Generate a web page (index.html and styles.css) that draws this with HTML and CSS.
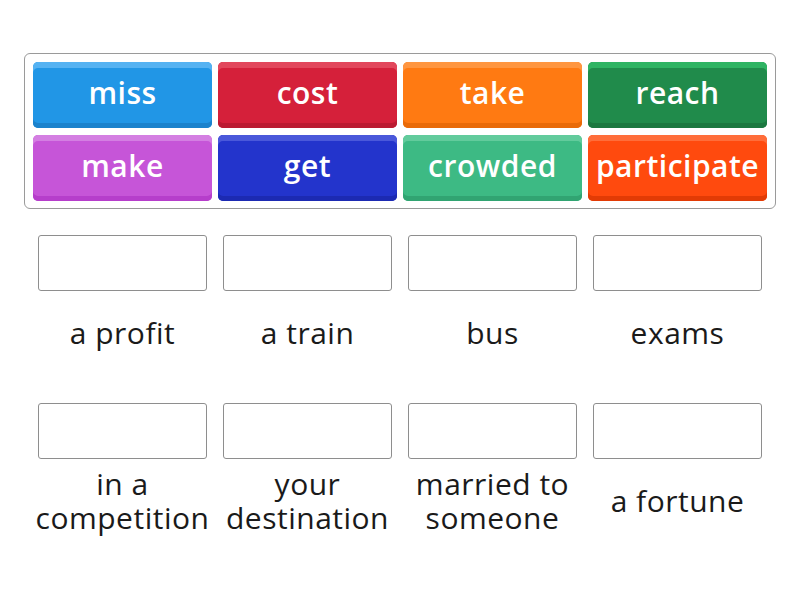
FILE: index.html
```html
<!DOCTYPE html>
<html>
<head>
<meta charset="utf-8">
<link rel="stylesheet" href="styles.css">
</head>
<body>
<div class="bank">
  <div class="tile t-blue">miss</div>
  <div class="tile t-red">cost</div>
  <div class="tile t-orange">take</div>
  <div class="tile t-green">reach</div>
  <div class="tile t-purple">make</div>
  <div class="tile t-navy">get</div>
  <div class="tile t-mint">crowded</div>
  <div class="tile t-vermil">participate</div>
</div>
<div class="targets">
  <div class="cell"><div class="box"></div><div class="label">a profit</div></div>
  <div class="cell"><div class="box"></div><div class="label">a train</div></div>
  <div class="cell"><div class="box"></div><div class="label">bus</div></div>
  <div class="cell"><div class="box"></div><div class="label">exams</div></div>
  <div class="cell"><div class="box"></div><div class="label">in a<br>competition</div></div>
  <div class="cell"><div class="box"></div><div class="label">your<br>destination</div></div>
  <div class="cell"><div class="box"></div><div class="label">married to<br>someone</div></div>
  <div class="cell"><div class="box"></div><div class="label">a fortune</div></div>
</div>
</body>
</html>
```
FILE: styles.css
```css
html, body {
  margin: 0;
  padding: 0;
  background: #ffffff;
  font-family: "Open Sans", "Lato", sans-serif;
}

.bank {
  margin: 53px 0 0 24px;
  width: 734px;
  border: 1px solid #9a9a9a;
  border-radius: 6px;
  padding: 8px 8px 7px 8px;
  display: grid;
  grid-template-columns: repeat(4, 179px);
  grid-auto-rows: 66px;
  column-gap: 6px;
  row-gap: 7px;
}

.tile {
  border-radius: 5px;
  color: #ffffff;
  font-size: 30px;
  font-weight: 600;
  letter-spacing: 0.5px;
  display: flex;
  align-items: center;
  justify-content: center;
  padding-bottom: 5px;
  box-sizing: border-box;
  white-space: nowrap;
}

.t-blue   { background: #2196e6; box-shadow: inset 0 6px 0 #55b2f2, inset 0 -5px 0 #1b82cc; }
.t-red    { background: #d5203a; box-shadow: inset 0 6px 0 #e2475c, inset 0 -5px 0 #bb1a31; }
.t-orange { background: #ff7a12; box-shadow: inset 0 6px 0 #ff9640, inset 0 -5px 0 #e96a08; }
.t-green  { background: #208b4b; box-shadow: inset 0 6px 0 #2fb463, inset 0 -5px 0 #1b7840; }
.t-purple { background: #c655d8; box-shadow: inset 0 6px 0 #d47fe2, inset 0 -5px 0 #b63ecb; }
.t-navy   { background: #2334cc; box-shadow: inset 0 6px 0 #4a58da, inset 0 -5px 0 #1c2ab2; }
.t-mint   { background: #3dba84; box-shadow: inset 0 6px 0 #62cb9c, inset 0 -5px 0 #31a472; }
.t-vermil { background: #ff4a0e; box-shadow: inset 0 6px 0 #ff6d3a, inset 0 -5px 0 #e23b05; }

.targets {
  margin: 26px 0 0 38px;
  display: grid;
  grid-template-columns: repeat(4, 169px);
  column-gap: 16px;
  row-gap: 28px;
}

.cell {
  display: flex;
  flex-direction: column;
}

.box {
  height: 56px;
  border: 1px solid #8e8e8e;
  border-radius: 3px;
  box-sizing: border-box;
  background: #ffffff;
}

.label {
  height: 84px;
  display: flex;
  align-items: center;
  justify-content: center;
  text-align: center;
  font-size: 30px;
  letter-spacing: 0.5px;
  line-height: 34px;
  color: #1a1a1a;
  white-space: nowrap;
}
```
